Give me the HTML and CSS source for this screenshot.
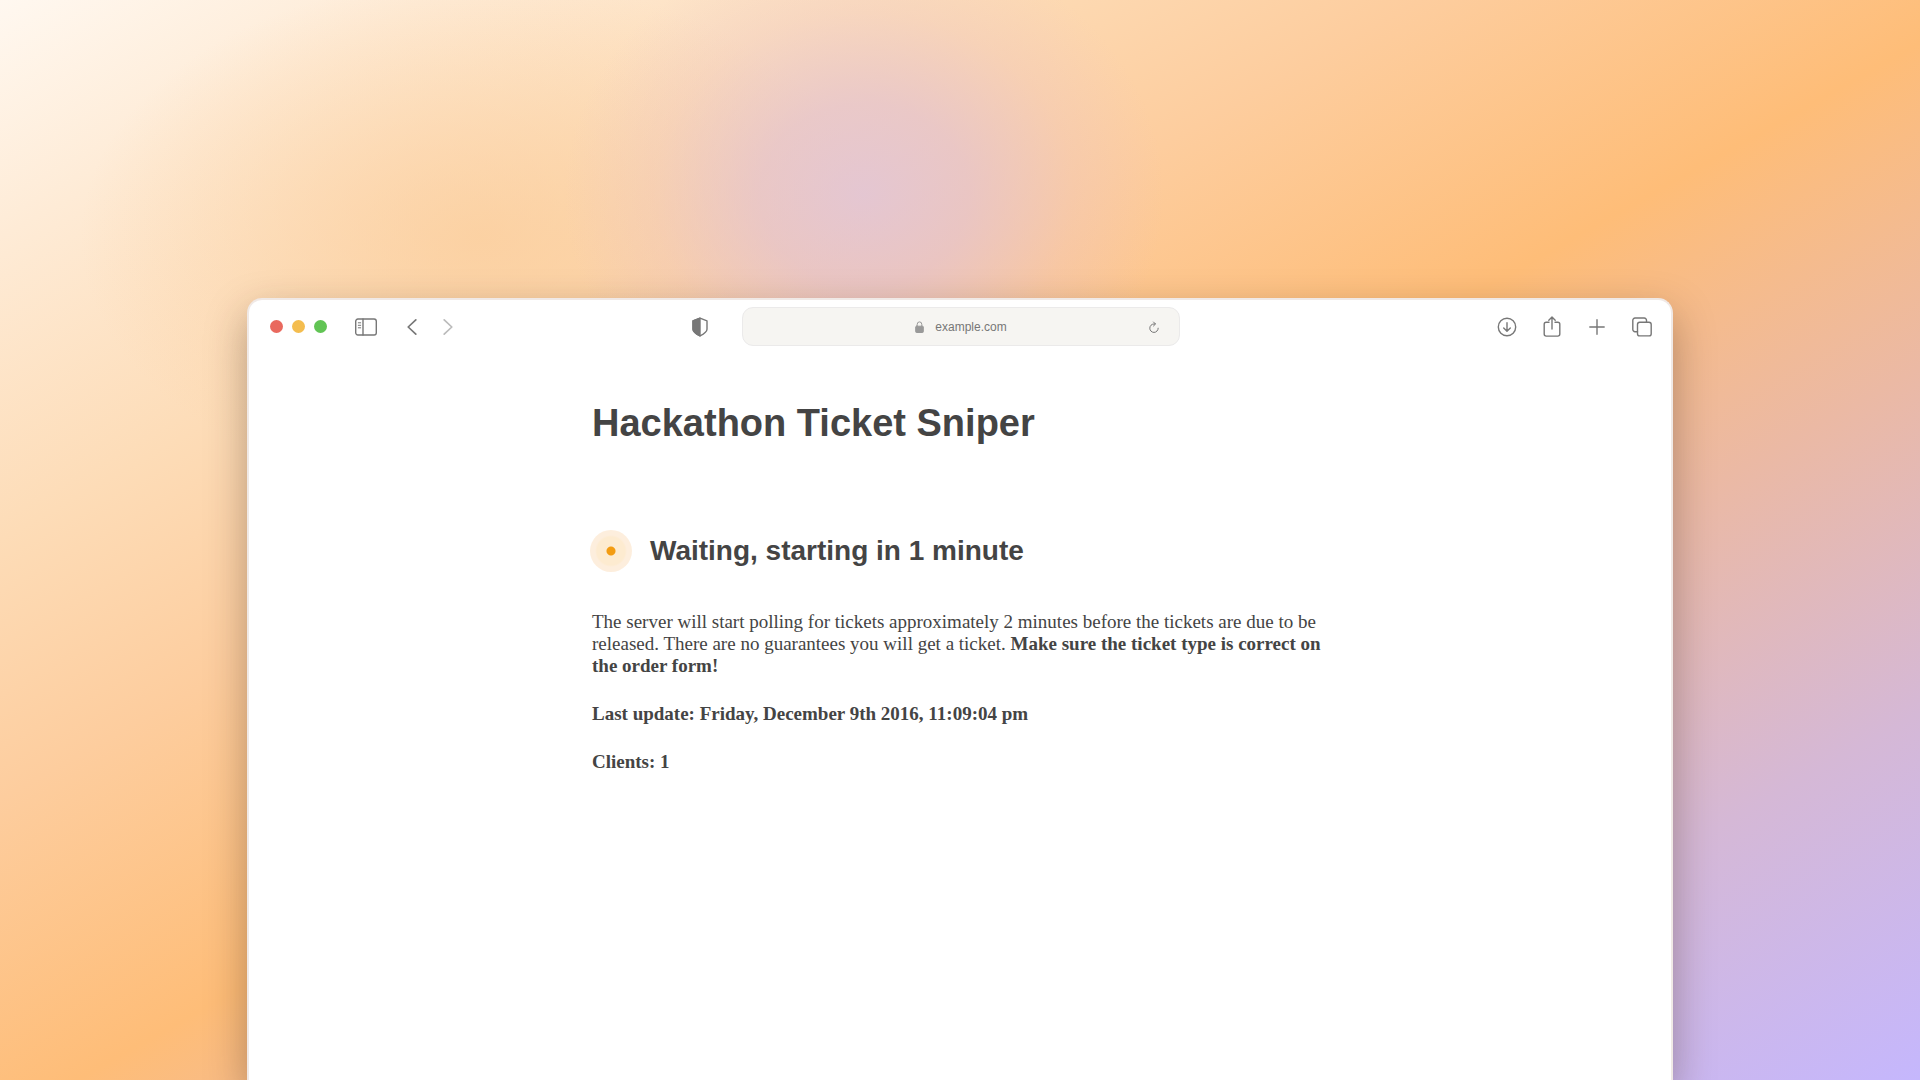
FILE: index.html
```html
<!DOCTYPE html>
<html lang="en">
<head>
    <meta charset="UTF-8">
    <meta name="viewport" content="width=device-width, initial-scale=1.0">
    <title>Hackathon Ticket Sniper</title>
    <link rel="stylesheet" href="styles.css">
</head>
<body>
    <div class="window">
        <header class="toolbar">
            <div class="toolbar-left">
                <div class="lights">
                    <button class="light red" aria-label="Close"></button>
                    <button class="light yellow" aria-label="Minimize"></button>
                    <button class="light green" aria-label="Zoom"></button>
                </div>
                <button class="icon-btn sidebar-btn" aria-label="Sidebar">
                    <svg width="22" height="18" viewBox="0 0 22 18">
                        <rect x="0.7" y="1" width="20.6" height="16" rx="2.2"/>
                        <path d="M8 1v16"/>
                        <path class="thin" d="M3.3 4.8h2.4M3.3 7.3h2.4M3.3 9.8h2.4"/>
                    </svg>
                </button>
                <div class="nav-btns">
                    <button class="icon-btn" aria-label="Back">
                        <svg width="10" height="16" viewBox="0 0 10 16"><path class="chevron" d="M8.8 0.9 1.2 8l7.6 7.1"/></svg>
                    </button>
                    <button class="icon-btn" aria-label="Forward" disabled>
                        <svg width="10" height="16" viewBox="0 0 10 16"><path class="chevron" d="M1.2 0.9 8.8 8l-7.6 7.1"/></svg>
                    </button>
                </div>
                <button class="icon-btn shield-btn" aria-label="Privacy report">
                    <svg width="16" height="20" viewBox="0 0 16 20">
                        <path d="M8 1.2 15 3.9v8.3c0 2.7-3.5 4.9-7 6.7-3.5-1.8-7-4-7-6.7V3.9z"/>
                        <path class="solid" d="M8 1.2 1 3.9v8.3c0 2.7 3.5 4.9 7 6.7z"/>
                    </svg>
                </button>
            </div>

            <div class="address">
                <div class="address-text">
                    <svg width="9" height="12" viewBox="0 0 9 12">
                        <path d="M2.2 5.5V3.4a2.3 2.5 0 0 1 4.6 0v2.1"/>
                        <rect class="solid" x="0.7" y="5.2" width="7.6" height="6.3" rx="0.8"/>
                    </svg>
                    <span>example.com</span>
                </div>
                <button class="icon-btn reload-btn" aria-label="Reload">
                    <svg width="10" height="12" viewBox="0 0 10 12">
                        <path d="M9.2 7.2A4.2 4.2 0 1 1 5 3h1.2M4.5 1l2 2-2 2"/>
                    </svg>
                </button>
            </div>

            <div class="toolbar-right">
                <button class="icon-btn" aria-label="Downloads">
                    <svg width="20" height="22" viewBox="0 0 20 22">
                        <circle cx="10" cy="11" r="8.7"/>
                        <path d="M10 6.7V15M6.7 11.9l3.3 3.3 3.3-3.3"/>
                    </svg>
                </button>
                <button class="icon-btn" aria-label="Share">
                    <svg width="20" height="22" viewBox="0 0 20 22">
                        <path d="M7 6.3H4.2a2 2 0 0 0-2 2v9.8a2 2 0 0 0 2 2h11.6a2 2 0 0 0 2-2V8.3a2 2 0 0 0-2-2H13M10 13V1.2M6.8 4.2 10 1l3.2 3.2"/>
                    </svg>
                </button>
                <button class="icon-btn" aria-label="New tab">
                    <svg width="20" height="22" viewBox="0 0 20 22"><path d="M10 3.8v14.4M2.8 11h14.4"/></svg>
                </button>
                <button class="icon-btn" aria-label="Tab overview">
                    <svg width="20" height="22" viewBox="0 0 20 22">
                        <path d="M5.5 15.7H3a2.2 2.2 0 0 1-2.2-2.2V4.2A2.2 2.2 0 0 1 3 2h9.3a2.2 2.2 0 0 1 2.2 2.2v2"/>
                        <rect x="5.5" y="6.2" width="13.7" height="13.7" rx="2.2"/>
                    </svg>
                </button>
            </div>
        </header>

        <main class="page">
            <h1>Hackathon Ticket Sniper</h1>
            <div class="status">
                <span class="pulse"></span>
                <h2>Waiting, starting in 1 minute</h2>
            </div>
            <p>The server will start polling for tickets approximately 2 minutes before the tickets are due to be released. There are no guarantees you will get a ticket. <strong>Make sure the ticket type is correct on the order form!</strong></p>
            <p><strong>Last update: Friday, December 9th 2016, 11:09:04 pm</strong></p>
            <p><strong>Clients: 1</strong></p>
        </main>
    </div>
</body>
</html>
```
FILE: styles.css
```css
:root {
    --text-color: #444;
    --icon-color: #777;
    --sans: "Liberation Sans", Arial, sans-serif;
}

* {
    box-sizing: border-box;
}

body {
    margin: 0;
    min-height: 100vh;
    display: flex;
    padding: 298px 247px 0;
    color: var(--text-color);
    font-family: "Liberation Serif", "Times New Roman", serif;
    background:
        radial-gradient(300px 260px at 45% 18%, rgba(222, 195, 220, 0.8) 0%, rgba(224, 192, 212, 0.65) 35%, rgba(230, 190, 200, 0.25) 70%, rgba(235, 195, 200, 0) 100%),
        radial-gradient(400px 260px at 25% 22%, rgba(251, 205, 155, 0.75) 0%, rgba(252, 210, 162, 0) 100%),
        linear-gradient(to bottom right, #fff8f0 0%, #feebd6 11%, #fddcb7 25%, #fdcd9e 37%, #febd78 52%, #ebb9a4 67%, #d5b8d6 83%, #c5b7fd 100%);
}

/* Browser window */
.window {
    flex: 1;
    background-color: #fff;
    border: 2px solid #f0e9e6;
    border-bottom: none;
    border-radius: 15px 15px 0 0;
    box-shadow: 0 16px 40px rgba(60, 35, 20, 0.36);
}

.toolbar {
    height: 53px;
    padding: 0 19px 0 21px;
    display: grid;
    grid-template-columns: 1fr 438px 1fr;
    align-items: center;
}

.toolbar-left,
.toolbar-right,
.lights,
.nav-btns,
.address,
.address-text {
    display: flex;
    align-items: center;
}

.lights {
    gap: 9px;
}

.light {
    width: 13px;
    height: 13px;
    padding: 0;
    border: none;
    border-radius: 50%;
}

.red {
    background-color: #e9695e;
}

.yellow {
    background-color: #f4bd4f;
}

.green {
    background-color: #61c454;
}

.icon-btn {
    display: flex;
    padding: 0;
    border: none;
    background: none;
    color: var(--icon-color);
}

.icon-btn:disabled {
    color: #bbb;
}

svg {
    fill: none;
    stroke: currentColor;
    stroke-width: 1.4;
    stroke-linecap: round;
    stroke-linejoin: round;
}

.solid {
    fill: currentColor;
}

.thin {
    stroke-width: 1;
}

.chevron {
    stroke-width: 1.7;
}

.sidebar-btn {
    margin-left: 28px;
}

.nav-btns {
    margin-left: 30px;
    gap: 26px;
}

.shield-btn {
    margin-left: auto;
    margin-right: 34px;
}

.address {
    height: 39px;
    padding: 0 20px 0 30px;
    background-color: #f6f5f2;
    border: 1px solid #ebeaea;
    border-radius: 11px;
    color: var(--icon-color);
    font: 12px var(--sans);
}

.address-text {
    flex: 1;
    gap: 11px;
    justify-content: center;
}

.address-text svg {
    color: #999;
    stroke-width: 1;
}

.reload-btn svg {
    stroke-width: 1;
}

.toolbar-right {
    justify-content: flex-end;
    gap: 25px;
}

/* Page content */
.page {
    max-width: 736px;
    margin: 0 auto;
    padding-top: 47px;
    font-size: 19px;
    line-height: 22px;
}

h1,
h2 {
    margin: 0;
    font-family: var(--sans);
}

h1 {
    font-size: 38px;
    line-height: 46px;
}

.status {
    display: flex;
    align-items: center;
    gap: 18px;
    margin: 84px 0 39px;
}

.pulse {
    width: 42px;
    height: 42px;
    margin-left: -2px;
    border-radius: 50%;
    background: radial-gradient(circle, #f39c12 4px, #fdebd0 5px, #fdebd0 14px, #fdeedd 16px);
}

h2 {
    font-size: 28px;
    line-height: 34px;
}

p {
    margin: 0 0 26px;
}
```
